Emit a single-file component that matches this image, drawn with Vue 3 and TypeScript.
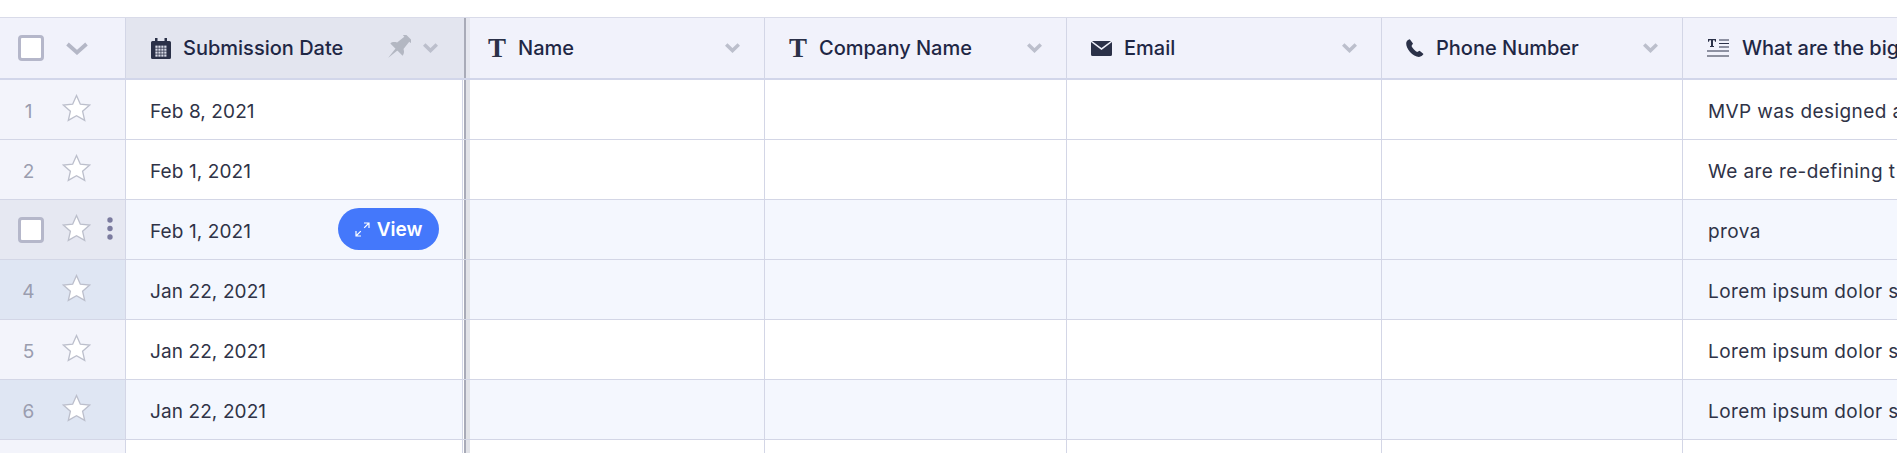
<script setup lang="ts">
interface Row { n: number; date: string; text: string; tone: string }
const rows: Row[] = [
  { n: 1, date: 'Feb 8, 2021', text: 'MVP was designed a', tone: '' },
  { n: 2, date: 'Feb 1, 2021', text: 'We are re-defining t', tone: '' },
  { n: 3, date: 'Feb 1, 2021', text: 'prova', tone: 'hover' },
  { n: 4, date: 'Jan 22, 2021', text: 'Lorem ipsum dolor s', tone: 'alt' },
  { n: 5, date: 'Jan 22, 2021', text: 'Lorem ipsum dolor s', tone: '' },
  { n: 6, date: 'Jan 22, 2021', text: 'Lorem ipsum dolor s', tone: 'alt' },
  { n: 7, date: '', text: '', tone: 'last' },
]
const cols = ['Name', 'Company Name', 'Email', 'Phone Number']
const calCells: { x: number; y: number }[] = []
for (let y = 0; y < 4; y++) for (let x = 0; x < 4; x++) calCells.push({ x: 4.4 + x * 2.95, y: 7.6 + y * 2.95 })
</script>

<template>
  <div class="page">
    <div class="table">
      <div class="row head">
        <div class="gutter">
          <span class="check"></span>
          <svg class="gchev" viewBox="0 0 22 13" width="22" height="13"><path d="M1.500 2l9.500 8.500L20.500 2" fill="none" stroke="#b4b7c6" stroke-width="3.800"/></svg>
        </div>
        <div class="cell date">
          <svg class="ic" width="20" height="21" viewBox="0 0 20 21"><path fill="#2b3148" d="M0 4.500A1.500 1.500 0 0 1 1.500 3H4V0h2.500v3h7V0H16v3h2.500A1.500 1.500 0 0 1 20 4.500v15a1.500 1.500 0 0 1-1.500 1.500h-17A1.500 1.500 0 0 1 0 19.500z"/><rect v-for="(c, i) in calCells" :key="i" :x="c.x" :y="c.y" width="2.200" height="2.200" fill="#d8dae6"/></svg>
          <span class="title">Submission Date</span>
          <svg class="pin" width="26" height="26" viewBox="0 0 24 24"><g transform="rotate(45 12 12)"><path fill="#b3b7c2" d="M7 -2h10v2.500h-1.800l1 8.500c2.300 1.200 3.800 3 3.800 5H4c0-2 1.500-3.800 3.800-5l1-8.500H7zM10.800 14h2.400l-1.200 11z"/></g></svg>
          <svg class="chev" width="15" height="10" viewBox="0 0 15 10"><path d="M1.200 1.500L7.500 7.500l6.300-6" fill="none" stroke="#bcbfcc" stroke-width="3.600"/></svg>
        </div>
        <div class="seam"></div>
        <div v-for="(c, i) in cols" :key="c" class="cell col">
          <span v-if="i < 2" class="tee">T</span>
          <svg v-else-if="i === 2" class="ic" width="21" height="15" viewBox="0 0 21 15"><path fill="#2b3148" d="M1 0h19l-9.500 7zM0 1l10.500 8L21 1v12.500a1.500 1.500 0 0 1-1.500 1.500h-18A1.500 1.500 0 0 1 0 13.500z"/></svg>
          <svg v-else class="ic" width="18" height="18" viewBox="0 0 18 18"><path fill="#2b3148" d="M3.800 0.300C2 .7.300 2.200.2 4c-.2 3 1.400 6.300 3.800 8.900 2.600 2.800 6 5 9 5 1.800 0 3.700-1.200 4.500-2.800l-3.900-3.400-2.500 1.300c-1.700-.8-4.700-3.800-5.600-6l1.500-2.400z"/></svg>
          <span class="title">{{ c }}</span>
          <svg class="chev last" width="15" height="10" viewBox="0 0 15 10"><path d="M1.200 1.500L7.500 7.500l6.300-6" fill="none" stroke="#bcbfcc" stroke-width="3.600"/></svg>
        </div>
        <div class="cell col wide">
          <svg class="ic lines" width="22" height="18" viewBox="0 0 22 18"><path stroke="#2b3148" stroke-width="1" fill="none" d="M12 1h10M12 4.500h10M12 8h10M0 12h22"/><path stroke="#6d7081" stroke-width="1.500" d="M0 17h22"/><path fill="#2b3148" d="M1 0h8v2.800H8L7.600 1.300H6V7h1v1H3V7h1V1.300H2.400L2 2.800H1z"/></svg>
          <span class="title">What are the big</span>
        </div>
      </div>

      <div v-for="r in rows" :key="r.n" class="row body" :class="r.tone">
        <div class="gutter">
          <span v-if="r.tone === 'hover'" class="check"></span>
          <span v-else-if="r.tone !== 'last'" class="num">{{ r.n }}</span>
          <svg v-if="r.tone !== 'last'" class="star" :class="{ shifted: r.tone === 'hover' }" width="29" height="28" viewBox="0 0 28 27"><path d="M14 1.500l3.700 8.300 9 .9-6.800 6 2 8.800L14 20.900l-7.900 4.600 2-8.800-6.800-6 9-.9z" fill="#fff" stroke="#bcbfcc" stroke-width="1.300"/></svg>
          <svg v-if="r.tone === 'hover'" class="dots" width="6" height="23" viewBox="0 0 6 23"><circle cx="3" cy="3" r="2.700"/><circle cx="3" cy="11.500" r="2.700"/><circle cx="3" cy="20" r="2.700"/></svg>
        </div>
        <div class="cell date">
          <span class="text">{{ r.date }}</span>
          <button v-if="r.tone === 'hover'" class="view" type="button">
            <svg width="15" height="15" viewBox="0 0 15 15"><path d="M9 1h5v5M14 1L9.200 5.800M6 14H1V9M1 14l4.800-4.800" fill="none" stroke="#fff" stroke-width="1.200"/></svg>
            View
          </button>
        </div>
        <div class="seam"></div>
        <div v-for="c in cols" :key="c" class="cell col"></div>
        <div class="cell col wide"><span class="text long">{{ r.text }}</span></div>
      </div>
    </div>
  </div>
</template>

<style scoped>
.page {
  width: 1897px;
  height: 453px;
  overflow: hidden;
  background: #fff;
  padding-top: 17px;
  box-sizing: border-box;
  font-family: Inter, "Liberation Sans", sans-serif;
}
.table {
  width: 2300px;
  border-top: 1px solid #d9dbe9;
}
.row {
  display: grid;
  grid-template-columns: 126px 340px 4px 295px 302px 315px 301px 1fr;
  box-sizing: border-box;
  height: 60px;
  border-bottom: 1px solid #d3d6e6;
  background: #fff;
}
.row.head {
  height: 62px;
  border-bottom: 2px solid #d2d6ea;
  background: #f1f2fb;
}
.row.alt, .row.hover { background: #f4f7fe; }
.gutter {
  display: flex;
  align-items: center;
  box-sizing: border-box;
  border-right: 1px solid #d3d6e6;
  background: #f3f4fb;
  padding-left: 18px;
}
.head .gutter { background: #f1f2fb; }
.alt .gutter { background: #dfe6f3; }
.hover .gutter { background: #e6e8f2; }
.check {
  width: 26px;
  height: 26px;
  box-sizing: border-box;
  border: 3px solid #b5b7ca;
  border-radius: 4px;
  background: #fff;
  flex: none;
}
.gchev { margin-left: 22px; flex: none; }
.num {
  width: 21px;
  padding-top: 4px;
  text-align: center;
  font-size: 19px;
  color: #9a9daf;
  flex: none;
}
.star { margin-left: 23px; margin-top: -4px; flex: none; }
.star.shifted { margin-left: 18px; }
.dots { margin-left: 16px; margin-top: -3px; fill: #7b7b9f; flex: none; }
.cell {
  display: flex;
  align-items: center;
  box-sizing: border-box;
  border-right: 1px solid #d3d6e6;
  padding-left: 25px;
  min-width: 0;
  overflow: hidden;
}
.head .date { background: #e3e5ef; border-right: 2px solid #a9abb8; }
.body .date { padding-left: 24px; border-right: 2px solid #a9abb8; box-shadow: inset -1px 0 0 #fff, inset -2px 0 0 #d3d6e6; }
.seam { background: #e2e3e8; }
.head .seam { background: #e6e7ef; }
.head .col { padding-left: 24px; }
.head .seam + .col { padding-left: 18px; }
.body .wide, .head .wide { border-right: 0; white-space: nowrap; }
.body .wide { padding-left: 25px; }
.title {
  font-size: 20px;
  font-weight: 500;
  color: #1f2745;
  white-space: nowrap;
}
.ic { flex: none; margin-right: 12px; }
.lines { margin-right: 13px; }
.tee {
  font-family: "Liberation Serif", serif;
  font-weight: 700;
  font-size: 27px;
  line-height: 1;
  color: #2b3148;
  margin-right: 12px;
  width: 18px;
  text-align: center;
  flex: none;
}
.pin { margin-left: auto; flex: none; }
.chev { margin-left: 12px; margin-right: 26px; flex: none; }
.chev.last { margin-left: auto; margin-right: 24px; }
.text {
  padding-top: 4px;
  font-size: 19px;
  letter-spacing: 0.1px;
  color: #2f3347;
  white-space: nowrap;
}
.text.long { letter-spacing: 0.4px; }
.view {
  margin-left: auto;
  margin-right: 25px;
  margin-top: -1px;
  display: flex;
  align-items: center;
  gap: 7px;
  height: 42px;
  width: 101px;
  justify-content: center;
  border: 0;
  border-radius: 21px;
  background: #4478fb;
  color: #fff;
  font: 600 19px Inter, "Liberation Sans", sans-serif;
  flex: none;
}
</style>
